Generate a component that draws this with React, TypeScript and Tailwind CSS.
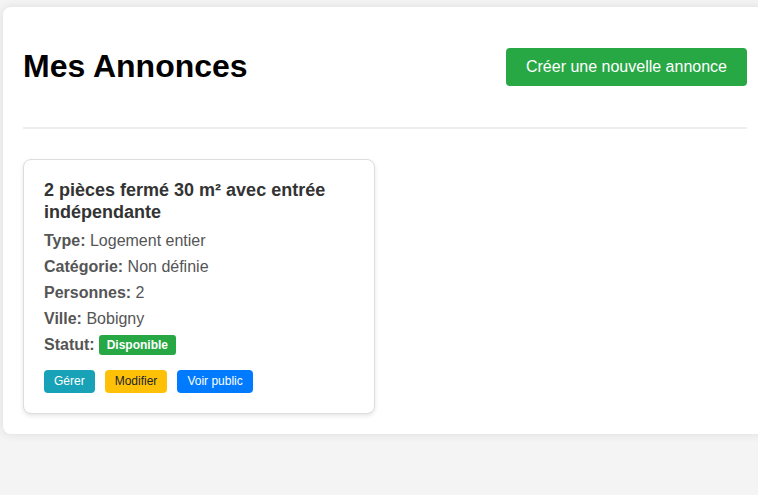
import React from 'react';

const listings = [
  {
    title: '2 pièces fermé 30 m² avec entrée indépendante',
    type: 'Logement entier',
    category: 'Non définie',
    people: 2,
    city: 'Bobigny',
  },
];

const App: React.FC = () => {
  return (
    <div className="min-h-screen overflow-hidden bg-[#f4f4f4] font-['Liberation_Sans',Arial,sans-serif]">
      <div className="ml-[3px] mt-[7px] w-[764px] rounded-lg bg-white p-5 shadow-[0_0_10px_rgba(0,0,0,0.1)]">
        {/* Header */}
        <div className="flex items-center justify-between border-b-2 border-[#eee] pb-[21px]">
          <h1 className="my-[21px] text-[32px] font-bold leading-[37px] text-black">Mes Annonces</h1>
          <button className="h-[38px] rounded bg-[#28a745] px-5 text-base text-white">
            Créer une nouvelle annonce
          </button>
        </div>

        {/* Listings */}
        <div className="mt-[30px] grid grid-cols-[352px] gap-5">
          {listings.map(l => (
            <div
              key={l.title}
              className="rounded-lg border border-[#ddd] bg-white p-5 shadow-[0_2px_4px_rgba(0,0,0,0.1)]"
            >
              <h3 className="mb-[5px] text-lg font-bold leading-[21.6px] text-[#333]">{l.title}</h3>
              <div className="text-base leading-[26px] text-[#555]">
                <p><strong>Type:</strong> {l.type}</p>
                <p><strong>Catégorie:</strong> {l.category}</p>
                <p><strong>Personnes:</strong> {l.people}</p>
                <p><strong>Ville:</strong> {l.city}</p>
                <p className="flex items-center gap-1">
                  <strong>Statut:</strong>
                  <span className="inline-block rounded-[3px] bg-[#28a745] px-2 text-xs font-bold leading-5 text-white">
                    Disponible
                  </span>
                </p>
              </div>
              <div className="mt-[12px] flex gap-2.5">
                <button className="rounded bg-[#17a2b8] px-2.5 py-1 text-xs leading-[15px] text-white">Gérer</button>
                <button className="rounded bg-[#ffc107] px-2.5 py-1 text-xs leading-[15px] text-[#212529]">Modifier</button>
                <button className="rounded bg-[#007bff] px-2.5 py-1 text-xs leading-[15px] text-white">Voir public</button>
              </div>
            </div>
          ))}
        </div>
      </div>
    </div>
  );
};

export default App;
